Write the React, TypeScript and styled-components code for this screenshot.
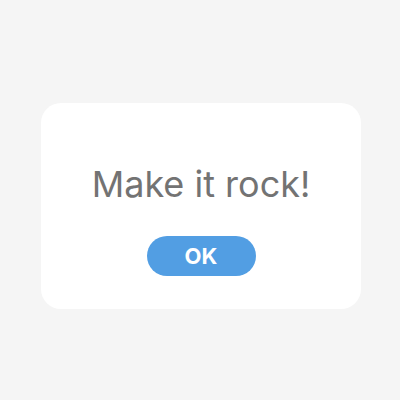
import React from 'react';
import styled, { createGlobalStyle } from 'styled-components';

const GlobalStyle = createGlobalStyle`
    body {
        margin: 0;
        background-color: #F5F5F5;
        font-family: Inter, "Noto Sans", sans-serif;
    }
`;

const Page = styled.div`
    height: 400px;
    display: flex;
    justify-content: center;
    align-items: flex-start;
    padding: 103px 0 0 2px;
    box-sizing: border-box;
`;

const Card = styled.div`
    width: 320px;
    height: 206px;
    box-sizing: border-box;
    padding: 59px 0 33px;
    background-color: #FFF;
    border-radius: 20px;
    display: flex;
    flex-direction: column;
    align-items: center;
    gap: 30px;
`;

const Message = styled.div`
    font-size: 36px;
    line-height: 44px;
    color: #737373;
    font-weight: 400;
`;

const OkButton = styled.button`
    width: 109px;
    height: 40px;
    border: none;
    outline: none;
    border-radius: 20px;
    background-color: #529EE3;
    color: #FFF;
    font-family: Inter, "Noto Sans", sans-serif;
    font-size: 22px;
    font-weight: 700;
    padding: 0;
    display: flex;
    justify-content: center;
    align-items: center;
`;

const App = () => {
    return (
        <>
            <GlobalStyle />
            <Page>
                <Card>
                    <Message>Make it rock!</Message>
                    <OkButton>OK</OkButton>
                </Card>
            </Page>
        </>
    );
};

export default App;
